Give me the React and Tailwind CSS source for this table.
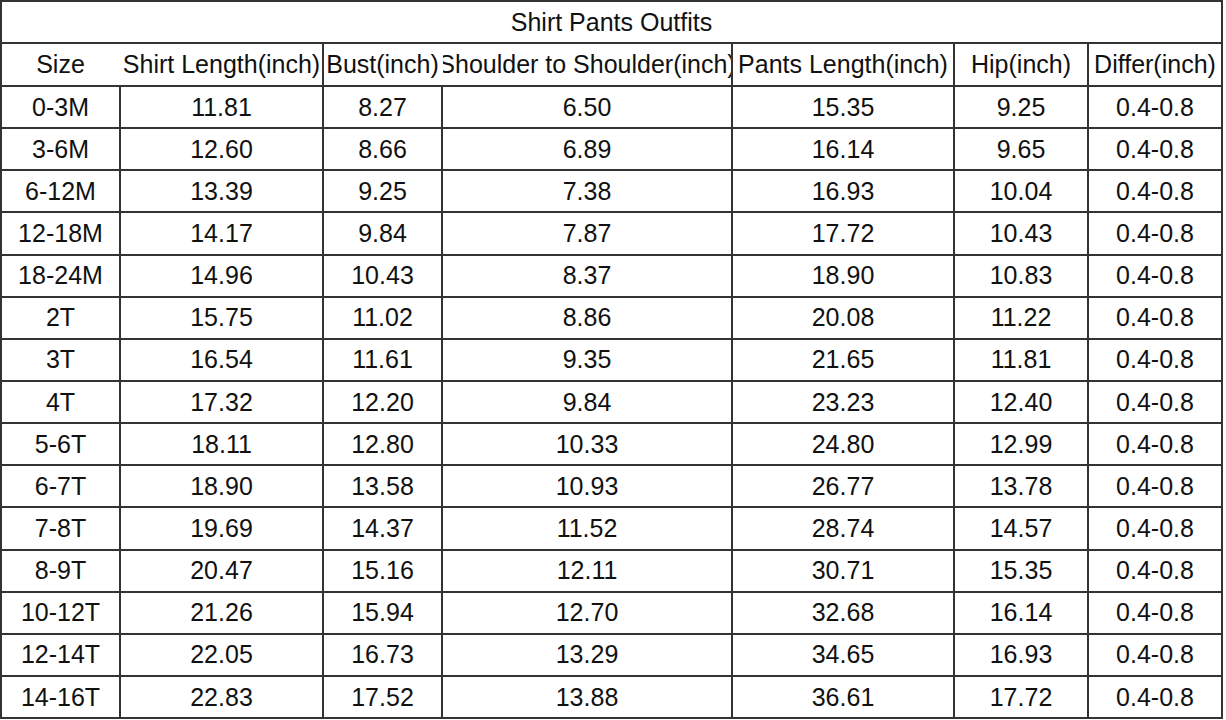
const rows = [
  ['0-3M', '11.81', '8.27', '6.50', '15.35', '9.25', '0.4-0.8'],
  ['3-6M', '12.60', '8.66', '6.89', '16.14', '9.65', '0.4-0.8'],
  ['6-12M', '13.39', '9.25', '7.38', '16.93', '10.04', '0.4-0.8'],
  ['12-18M', '14.17', '9.84', '7.87', '17.72', '10.43', '0.4-0.8'],
  ['18-24M', '14.96', '10.43', '8.37', '18.90', '10.83', '0.4-0.8'],
  ['2T', '15.75', '11.02', '8.86', '20.08', '11.22', '0.4-0.8'],
  ['3T', '16.54', '11.61', '9.35', '21.65', '11.81', '0.4-0.8'],
  ['4T', '17.32', '12.20', '9.84', '23.23', '12.40', '0.4-0.8'],
  ['5-6T', '18.11', '12.80', '10.33', '24.80', '12.99', '0.4-0.8'],
  ['6-7T', '18.90', '13.58', '10.93', '26.77', '13.78', '0.4-0.8'],
  ['7-8T', '19.69', '14.37', '11.52', '28.74', '14.57', '0.4-0.8'],
  ['8-9T', '20.47', '15.16', '12.11', '30.71', '15.35', '0.4-0.8'],
  ['10-12T', '21.26', '15.94', '12.70', '32.68', '16.14', '0.4-0.8'],
  ['12-14T', '22.05', '16.73', '13.29', '34.65', '16.93', '0.4-0.8'],
  ['14-16T', '22.83', '17.52', '13.88', '36.61', '17.72', '0.4-0.8'],
]

// widths include the left border of each cell
const widths = ['w-[117px]', 'w-[203px]', 'w-[119px]', 'w-[290px]', 'w-[222px]', 'w-[134px]', 'w-[134px]']

const headers = ['Size', 'Shirt Length(inch)', 'Bust(inch)', 'Shoulder to Shoulder(inch)', 'Pants Length(inch)', 'Hip(inch)', 'Differ(inch)']
// header row only has some dividers
const headerLines = [false, false, true, false, true, true, true]

function Cell({ i, line, children }) {
  return (
    <div
      className={`${widths[i]} shrink-0 h-full flex items-center justify-center overflow-hidden whitespace-nowrap ${
        i === 0 ? '' : line ? 'border-l-2 border-[#333]' : 'border-l-2 border-transparent'
      }`}
    >
      {children}
    </div>
  )
}

export default function App() {
  return (
    <div className="w-[1226px] h-[720px] bg-white">
      <div
        className="w-[1223px] h-[719px] border-2 border-[#333] flex flex-col text-[25px] text-[#111] leading-none"
        style={{ fontFamily: '"Liberation Sans", Arial, sans-serif' }}
      >
        {/* Title */}
        <div className="h-[40px] shrink-0 flex items-center justify-center">Shirt Pants Outfits</div>

        {/* Header */}
        <div className="h-[43px] shrink-0 flex border-t-2 border-[#333]">
          {headers.map((h, i) => (
            <Cell key={h} i={i} line={headerLines[i]}>
              {h}
            </Cell>
          ))}
        </div>

        {/* Data */}
        {rows.map((r) => (
          <div key={r[0]} className="flex-1 min-h-0 flex border-t-2 border-[#333]">
            {r.map((v, i) => (
              <Cell key={i} i={i} line>
                {v}
              </Cell>
            ))}
          </div>
        ))}
      </div>
    </div>
  )
}
